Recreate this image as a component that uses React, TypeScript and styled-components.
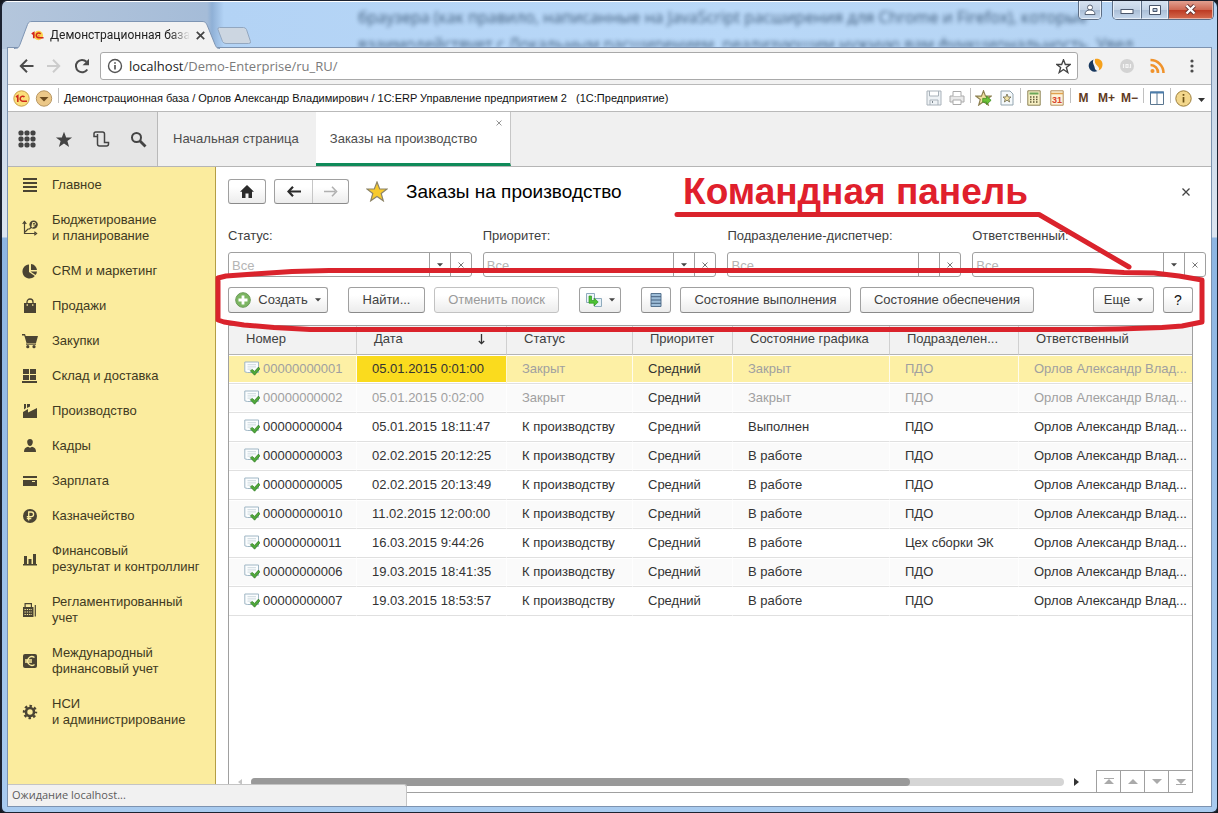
import React from 'react';
import styled, { createGlobalStyle, css } from 'styled-components';

const Global = createGlobalStyle`
  * { box-sizing: border-box; }
  html, body, #root { height: 100%; }
  body { margin: 0; background: #15181f; font: 13px/16px Arial, "Liberation Sans", sans-serif; color: #404040; }
  button, input { font: inherit; color: inherit; }
  button { cursor: pointer; }
  svg { display: block; flex: none; }
`;

const ui = '"Open Sans", "Noto Sans", sans-serif';

/* ---------- window frame ---------- */
const Frame = styled.div`
  position: relative;
  display: flex;
  flex-direction: column;
  min-height: 100%;
  padding: 0 6px 6px;
  overflow: hidden;
  border: solid #1c2230;
  border-width: 1px 1px 1px 2px;
  border-radius: 7px 7px 6px 6px;
  background:
    linear-gradient(#fff, #fff) top / 100% 1px no-repeat,
    linear-gradient(90deg, #b4c6dc 0, #a5bcd8 205px, #8fb0d6 210px, #b3d3f5 222px, #b9d8f8 60%, #b5d3f2) top / 100% 48px no-repeat,
    linear-gradient(#c3d3e6 48px, #dce5f0 236px, #8db5e2 237px, #a9cbef 100%);
`;

const Glass = styled.header`
  position: relative;
  display: flex;
  align-items: flex-end;
  height: 47px;
  padding-left: 6px;
  flex: none;
`;

const Behind = styled.p`
  position: absolute;
  left: 350px;
  top: 3px;
  margin: 0;
  width: 840px;
  height: 44px;
  overflow: hidden;
  white-space: pre;
  font: 16px/27px ${ui};
  color: #2d4a69;
  opacity: 0.85;
  filter: blur(2px);
`;

const BrowserTab = styled.div`
  position: relative;
  display: flex;
  align-items: center;
  width: 206px;
  height: 28px;
  padding: 0 18px 0 17px;
  margin-bottom: -1px;
  z-index: 1;
`;
const TabShape = styled.svg`
  position: absolute;
  inset: 0;
`;
const TabTitle = styled.span`
  position: relative;
  flex: 1;
  margin: 0 6px;
  white-space: nowrap;
  font: 12px/18px Roboto, ${ui};
  color: #222;
  mask-image: linear-gradient(90deg, #000 86%, transparent);
`;
const BareButton = styled.button`
  position: relative;
  display: flex;
  align-items: center;
  justify-content: center;
  padding: 0;
  border: 0;
  background: none;
`;
const NewTab = styled.button`
  margin: 0 0 3px -4px;
  padding: 0;
  border: 0;
  background: none;
`;

const Caption = styled.div`
  position: absolute;
  top: 0;
  right: -3px;
  display: flex;
`;
const CaptionGroup = styled.div`
  display: flex;
  margin-left: 10px;
  border: 1px solid #5c6d84;
  border-top: 0;
  border-radius: 0 0 5px 5px;
  overflow: hidden;
`;
const CaptionButton = styled.button<{ $w: number; $danger?: boolean }>`
  display: flex;
  align-items: center;
  justify-content: center;
  width: ${(p) => p.$w}px;
  height: 18px;
  padding: 0;
  border: 1px solid #e6eef8;
  border-top: 0;
  background: linear-gradient(#d7e3f1 0, #c4d3e5 50%, #a9bdd5 51%, #c3d5ea 100%);
  & + & { border-left: 1px solid #5c6d84; }
  ${(p) => p.$danger && css`
    border-color: #e9b0a2;
    background: linear-gradient(#e2a090 0, #cf6a55 50%, #bb3720 51%, #d2664a 100%);
  `}
`;

const Client = styled.div`
  position: relative;
  flex: 1;
  display: flex;
  flex-direction: column;
  background: #fff;
  outline: 1px solid #7d93b0;
`;

const AddressBar = styled.div`
  display: flex;
  align-items: center;
  height: 37px;
  padding: 0 10px 0 4px;
  background: #f2f2f2;
  border-bottom: 1px solid #b9b9b9;
`;
const NavIcon = styled(BareButton)`
  width: 28px;
  height: 28px;
`;
const UrlBox = styled.div`
  display: flex;
  align-items: center;
  flex: 1;
  height: 28px;
  margin: 0 9px 0 4px;
  padding: 0 6px;
  border: 1px solid #a9a9a9;
  border-radius: 3px;
  background: #fff;
`;
const Url = styled.div`
  flex: 1;
  margin-left: 6px;
  font: 13px/20px ${ui};
  color: #7b7b7b;
  b { font-weight: 400; color: #222; }
`;
const Extensions = styled.div`
  display: flex;
  align-items: center;
  gap: 14px;
`;

const SystemBar = styled.div`
  display: flex;
  align-items: center;
  height: 27px;
  padding: 0 4px 0 5px;
  border-bottom: 1px solid #b9b9b9;
  background: #fff;
`;
const SystemTitle = styled.span`
  flex: 1;
  margin-left: 4px;
  font: 11px/16px "Liberation Sans", Arial, sans-serif;
  color: #111;
  white-space: pre;
`;
const Divider = styled.i`
  width: 1px;
  height: 15px;
  margin: 0 1px 6px 2px;
  background: #c0c0c0;
`;
const ToolIcon = styled(BareButton)`
  width: 23px;
  height: 22px;
  font: bold 12px/16px "Liberation Sans", Arial, sans-serif;
  color: #5f3a22;
`;

/* ---------- section tabs ---------- */
const TabStrip = styled.div`
  display: flex;
  height: 55px;
  background: #f0f0f0;
  border-bottom: 1px solid #b5b5b5;
`;
const QuickIcons = styled.div`
  display: flex;
  align-items: center;
  justify-content: space-between;
  width: 150px;
  padding: 0 8px;
  background: #e5e5e5;
  border-right: 1px solid #b9b9b9;
  ${BareButton} { width: 22px; height: 24px; }
`;
const SectionTab = styled.div<{ $active?: boolean }>`
  position: relative;
  display: flex;
  align-items: center;
  padding: 0 17px 0 15px;
  color: #4d4d4d;
  white-space: nowrap;
  a { color: inherit; text-decoration: none; }
  ${(p) => p.$active && css`
    padding: 3px 33px 0 14px;
    background: #fff;
    border-right: 1px solid #c6c6c6;
    border-bottom: 3px solid #0f8a59;
  `}
`;
const TabClose = styled(BareButton)`
  position: absolute;
  top: 6px;
  right: 6px;
  width: 10px;
  height: 10px;
`;

/* ---------- body ---------- */
const Body = styled.div`
  display: flex;
  flex: 1;
`;
const Sidebar = styled.nav`
  width: 208px;
  flex: none;
  padding-top: 1px;
  background: #fbec9e;
  border-right: 1px solid #b49e45;
`;
const SideLink = styled.a`
  display: flex;
  align-items: center;
  padding: 9px 4px 10px 14px;
  color: #3f3a22;
  text-decoration: none;
  white-space: pre;
  span { margin-left: 14px; }
`;

const Page = styled.main`
  position: relative;
  flex: 1;
  min-width: 0;
  display: flex;
  flex-direction: column;
  padding: 12px 18px 13px 12px;
`;
const PageHeader = styled.div`
  display: flex;
  align-items: center;
  height: 25px;
`;
const face = css`
  border: 1px solid #a0a0a0;
  border-bottom-color: #8a8a8a;
  border-radius: 3px;
  background: linear-gradient(#fff 30%, #ececec);
`;
const HomeButton = styled.button`
  ${face}
  display: flex;
  align-items: center;
  justify-content: center;
  width: 38px;
  height: 25px;
  padding: 0;
`;
const History = styled.div`
  ${face}
  display: flex;
  height: 25px;
  margin: 0 17px 0 8px;
  ${BareButton} { width: 37px; }
  ${BareButton} + ${BareButton} { width: 36px; border-left: 1px solid #c6c6c6; }
`;
const Title = styled.h1`
  flex: 1;
  margin: 0 0 0 18px;
  font: 19px/24px Arial, "Liberation Sans", sans-serif;
  color: #000;
`;

const Filters = styled.div`
  display: grid;
  grid-template-columns: 244fr 234fr 234fr 234fr;
  column-gap: 11px;
  margin: 24px -13px 0 0;
`;
const Filter = styled.label`
  display: block;
  min-width: 0;
`;
const Combo = styled.span`
  display: flex;
  height: 25px;
  margin-top: 8px;
  border: 1px solid #a0a0a0;
  border-radius: 3px;
  background: #fff;
  ${BareButton} { width: 21px; border-left: 1px solid #a0a0a0; }
`;
const ComboInput = styled.input`
  flex: 1;
  min-width: 0;
  padding: 2px 3px 0;
  border: 0;
  background: none;
  outline: 0;
  &::placeholder { color: #b5b5b5; opacity: 1; }
`;

const Commands = styled.div`
  display: flex;
  gap: 9px;
  margin: 10px 0 12px;
`;
const Command = styled.button<{ $w: number; $gap?: number }>`
  ${face}
  display: flex;
  align-items: center;
  justify-content: center;
  gap: 7px;
  flex: none;
  width: ${(p) => p.$w}px;
  height: 26px;
  margin-right: ${(p) => p.$gap ?? 0}px;
  padding: 0;
  white-space: nowrap;
  &:disabled { color: #9a9a9a; border-color: #c2c2c2; cursor: default; }
`;
const HelpCommand = styled(Command)`
  font-size: 14px;
  color: #111;
`;
const Spacer = styled.span`
  flex: 1;
`;

const Grid = styled.div`
  flex: 1;
  display: flex;
  flex-direction: column;
  justify-content: space-between;
  border: 1px solid #a0a0a0;
`;
const Table = styled.table`
  width: 100%;
  table-layout: fixed;
  border-collapse: separate;
  border-spacing: 0;
`;
const Th = styled.th`
  height: 29px;
  padding: 0 8px 2px 17px;
  border-right: 1px solid #d0d0d0;
  border-bottom: 1px solid #b5b5b5;
  background: #f2f2f2;
  font-weight: 400;
  text-align: left;
  white-space: nowrap;
  overflow: hidden;
  text-overflow: ellipsis;
  &:last-child { border-right: 0; }
`;
const ThSort = styled.span`
  display: flex;
  align-items: center;
  justify-content: space-between;
  padding-right: 12px;
`;
const Tr = styled.tr<{ $selected?: boolean; $closed?: boolean }>`
  color: ${(p) => (p.$closed ? '#a0a0a0' : '#333')};
  background: #fff;
  &:nth-child(even) { background: #fafafa; }
  ${(p) => p.$selected && css`&& { background: #fdf0a5; }`}
`;
const Td = styled.td<{ $current?: boolean; $dark?: boolean }>`
  height: 29px;
  padding: 0 2px 1px 15px;
  border-bottom: 1px solid #e0e0e0;
  border-right: 1px solid rgba(255, 255, 255, 0.8);
  box-shadow: inset 0 1px #fff, inset 0 -1px #fff;
  white-space: nowrap;
  overflow: hidden;
  text-overflow: ellipsis;
  ${(p) => p.$dark && 'color: #333;'}
  ${(p) => p.$current && 'background: #fadb1e; color: #333;'}
  &:last-child { border-right: 0; }
`;
const OrderNumber = styled.span`
  display: flex;
  align-items: center;
  gap: 3px;
`;

const GridFooter = styled.div`
  display: flex;
  align-items: center;
  height: 21px;
  padding-left: 9px;
`;
const Track = styled.div`
  flex: 1;
  height: 8px;
  margin: 0 10px 0 9px;
  border-radius: 4px;
  background: #d5d5d5;
`;
const Thumb = styled.div`
  width: 81%;
  height: 8px;
  border-radius: 4px;
  background: #999;
`;
const Steps = styled.div`
  display: flex;
  height: 22px;
  margin: -1px 0 0 17px;
  border-top: 1px solid #a0a0a0;
  ${BareButton} { width: 24px; border-left: 1px solid #a0a0a0; }
`;

const StatusBubble = styled.div`
  position: absolute;
  left: 0;
  bottom: 0;
  width: 399px;
  height: 22px;
  padding-left: 4px;
  background: #f1f1f1;
  border: solid #c4c4c4;
  border-width: 1px 1px 0 0;
  border-radius: 0 3px 0 0;
  font: 11px/20px ${ui};
  color: #5c5c5c;
`;

/* ---------- red marker note ---------- */
const Note = styled.strong`
  position: absolute;
  right: 183px;
  top: 2px;
  font: bold 37px/46px Arial, "Liberation Sans", sans-serif;
  color: #e0202c;
  white-space: nowrap;
`;
const Marker = styled.svg`
  position: absolute;
  right: 5px;
  top: 42px;
  pointer-events: none;
`;

/* ---------- icons ---------- */
const Cross = ({ s = 8, c = '#444', w = 1.3 }: { s?: number; c?: string; w?: number }) => (
  <svg width={s} height={s} viewBox="0 0 8 8" stroke={c} strokeWidth={w}><path d="M.7.7l6.6 6.6M7.3.7L.7 7.3" /></svg>
);
const Down = () => <svg width="6" height="4" viewBox="0 0 6 4" fill="#444"><path d="M0 .3h6L3 3.6z" /></svg>;
const Logo = () => (
  <svg width="13" height="13" viewBox="0 0 14 14" fill="none">
    <circle cx="8" cy="7" r="5" fill="#fbd24c" />
    <path d="M.8 5.400L3 4v6" stroke="#d3261b" strokeWidth="1.800" />
    <path d="M10.400 5.400a2.600 2.600 0 1 0-1.900 4.100h5" stroke="#d3261b" strokeWidth="1.700" />
    <path d="M9 7.500H8" stroke="#d3261b" strokeWidth="1.400" />
  </svg>
);
const Doc = () => (
  <svg width="16" height="15" viewBox="0 0 16 15" fill="none">
    <path d="M.8 1h13.700v10.500H3.400L.8 10.800z" fill="#fbfdfe" stroke="#9fb6c4" />
    <path d="M3.500 3.700h8.500M3.500 5.900h8.500M3.500 8.100h4" stroke="#ccd8de" />
    <path d="M6.300 9.800l2-1.400 2.200 2 4-4.300 1.300 1.800-5.200 6.300z" fill="#4fa83a" stroke="#2b7a20" strokeWidth=".7" />
  </svg>
);
const STAR = 'M11 1l2.700 7h7.300l-5.800 4.500 2.100 7.300L11 15.400l-6.300 4.400 2.100-7.300L1 8h7.300z';

const Side = ({ children }: { children: React.ReactNode }) => (
  <svg width="16" height="16" viewBox="0 0 16 16" fill="#4a4433">{children}</svg>
);

const sections: { label: string; icon: React.ReactNode }[] = [
  { label: 'Главное', icon: <path d="M1 1h14v2H1zM1 5h14v2H1zM1 9h14v2H1zM1 13h14v2H1z" /> },
  {
    label: 'Бюджетирование\nи планирование',
    icon: (
      <>
        <path d="M2.500 2.500v11h11M3 12l3-3h1.500l2-2M.7 4l1.800-2.500L4.300 4M12.300 11.700l2.300 1.800-2.300 1.800" fill="none" stroke="#4a4433" strokeWidth="1.200" />
        <circle cx="11.600" cy="4.600" r="4.200" />
        <path d="M10.600 7.600V2.500h1.600a1.200 1.200 0 0 1 0 2.600H9.400M9.400 6.400h3" fill="none" stroke="#fbec9e" />
      </>
    ),
  },
  { label: 'CRM и маркетинг', icon: <><path d="M7 1.500V9l5.800 4A7 7 0 1 1 7 1.500z" /><path d="M9 1a6.500 6.500 0 0 1 6 6H9z" /><path d="M8.500 8.500H15a6.500 6.500 0 0 1-1.500 3.600z" /></> },
  { label: 'Продажи', icon: <><path d="M2 5h12v10H2z" /><path d="M5 8V4a3 3 0 0 1 6 0v4" fill="none" stroke="#4a4433" strokeWidth="1.300" /><path d="M5.200 6v2M10.800 6v2" stroke="#fbec9e" /></> },
  { label: 'Закупки', icon: <><path d="M0 1h3l.7 2H16l-2 7H4.500L2.300 2.500H0z" /><path d="M4 10.500h10v1.200H4z" /><circle cx="5.800" cy="13.700" r="1.600" /><circle cx="12" cy="13.700" r="1.600" /></> },
  { label: 'Склад и доставка', icon: <path d="M1 1h6v5H1zM8 1h6v5H8zM1 7h6v5H1zM8 7h6v5H8zM0 13h15v2H0z" /> },
  { label: 'Производство', icon: <path d="M1 15V9l5-3v3.500L15 5v10zM2 1h2v4L2 6.500zM5 1h3v2.500L5 5z" /> },
  { label: 'Кадры', icon: <><path d="M8 1c2 0 3 1.300 2.800 3.200C10.600 6.500 9.500 8 8 8S5.400 6.500 5.200 4.200C5 2.300 6 1 8 1z" /><path d="M2 14c0-3 1-4.500 4-5.200l2 1 2-1c3 .7 4 2.200 4 5.200z" /></> },
  { label: 'Зарплата', icon: <path fillRule="evenodd" d="M1 3h14v2H1zM1 7h14v6H1zM10 8h3v1h-3z" /> },
  {
    label: 'Казначейство',
    icon: <><circle cx="8" cy="8" r="7" /><path d="M6.700 12.500V4h2.600a2.300 2.300 0 0 1 0 4.600H4.800M4.800 10.500h4.500" fill="none" stroke="#fbec9e" strokeWidth="1.300" /></>,
  },
  { label: 'Финансовый\nрезультат и контроллинг', icon: <path d="M1 13h14v1.500H1zM2 5h3v8H2zM6.500 8h3v5h-3zM11 3h3v10h-3z" /> },
  {
    label: 'Регламентированный\nучет',
    icon: (
      <>
        <path fillRule="evenodd" d="M2.500 1h7.500v4h1.500v10H1V5h1.500zM3.700 2.200V5h5.100V2.200z" />
        <path d="M13.300 3v11.500" stroke="#4a4433" strokeWidth="1.200" />
        <path d="M2.500 7.500h7.500M2.500 10h7.500M2.500 12.500h7.500" stroke="#fbec9e" strokeDasharray="1.300 1" />
      </>
    ),
  },
  {
    label: 'Международный\nфинансовый учет',
    icon: <><rect x="1" y="1" width="14" height="14" rx="2" /><path d="M12.500 4.600A4.300 4.300 0 1 0 12.500 11.400M3 7h7M3 9h7" fill="none" stroke="#fbec9e" strokeWidth="1.300" /></>,
  },
  {
    label: 'НСИ\nи администрирование',
    icon: (
      <>
        <circle cx="8" cy="8" r="4" fill="none" stroke="#4a4433" strokeWidth="2.600" />
        <circle cx="8" cy="8" r="6" fill="none" stroke="#4a4433" strokeWidth="2.400" strokeDasharray="2.500 2.212" strokeDashoffset="1.250" />
      </>
    ),
  },
];

const rows = [
  ['00000000001', '05.01.2015 0:01:00', 'Закрыт', 'Закрыт', 'ПДО'],
  ['00000000002', '05.01.2015 0:02:00', 'Закрыт', 'Закрыт', 'ПДО'],
  ['00000000004', '05.01.2015 18:11:47', 'К производству', 'Выполнен', 'ПДО'],
  ['00000000003', '02.02.2015 20:12:25', 'К производству', 'В работе', 'ПДО'],
  ['00000000005', '02.02.2015 20:13:49', 'К производству', 'В работе', 'ПДО'],
  ['00000000010', '11.02.2015 12:00:00', 'К производству', 'В работе', 'ПДО'],
  ['00000000011', '16.03.2015 9:44:26', 'К производству', 'В работе', 'Цех сборки ЭК'],
  ['00000000006', '19.03.2015 18:41:35', 'К производству', 'В работе', 'ПДО'],
  ['00000000007', '19.03.2015 18:53:57', 'К производству', 'В работе', 'ПДО'],
];
const columnWidths = ['128', '150', '126', '100', '157', '129', '173'];

const filters = [
  { label: 'Статус:', list: true },
  { label: 'Приоритет:', list: true },
  { label: 'Подразделение-диспетчер:', list: false },
  { label: 'Ответственный:', list: true },
];

export default function App() {
  return (
    <>
      <Global />
      <Frame>
        <Glass>
          <Behind aria-hidden="true">
            {'браузера (как правило, написанные на JavaScript расширения для Chrome и Firefox), которые\nвзаимодействует с Локальным расширением, реализующим нужную вам функциональность. Увел'}
          </Behind>
          <BrowserTab>
            <TabShape width="206" height="28" viewBox="0 0 206 28">
              <path d="M0 27.500C4 27.500 4.500 27 6 23.500L13.500 3.500C14.500 1 15.500.5 18 .5h170c3 0 4 1 5.500 4.500l7.500 18.500c1.500 3.500 2.500 4 5 4" fill="#f2f2f2" stroke="#7e95b3" />
            </TabShape>
            <BareButton as="span"><Logo /></BareButton>
            <TabTitle>Демонстрационная база</TabTitle>
            <BareButton aria-label="Закрыть вкладку"><Cross s={9} w={1.5} /></BareButton>
          </BrowserTab>
          <NewTab aria-label="Новая вкладка">
            <svg width="36" height="18" viewBox="0 0 36 18"><path d="M3.500.5h24q2 0 3 2l4 12q.6 2-2 2H10q-2.500 0-3.500-2l-4.500-12q-.5-2 1.500-2z" fill="#ccd6e1" stroke="#92a7c0" /></svg>
          </NewTab>
          <Caption>
            <CaptionGroup>
              <CaptionButton $w={22} aria-label="Пользователь">
                <svg width="12" height="11" viewBox="0 0 12 11" fill="#fff" stroke="#5a6577"><circle cx="6" cy="3.500" r="2.500" /><path d="M1 10.500c0-3 2-4.500 5-4.500s5 1.500 5 4.500z" /></svg>
              </CaptionButton>
            </CaptionGroup>
            <CaptionGroup>
              <CaptionButton $w={28} aria-label="Свернуть">
                <svg width="14" height="10" viewBox="0 0 14 10"><rect x="1" y="4.500" width="12" height="4" fill="#fff" stroke="#4a566b" /></svg>
              </CaptionButton>
              <CaptionButton $w={27} aria-label="Развернуть">
                <svg width="12" height="10" viewBox="0 0 12 10"><path fillRule="evenodd" d="M.5.5h11v9H.5zM4 3.500h4v3H4z" fill="#fff" stroke="#4a566b" /></svg>
              </CaptionButton>
              <CaptionButton $w={45} $danger aria-label="Закрыть">
                <svg width="13" height="11" viewBox="0 0 13 11"><path d="M2.500 1.500l8 8M10.500 1.500l-8 8" stroke="#5c3030" strokeWidth="4" /><path d="M2.500 1.500l8 8M10.500 1.500l-8 8" stroke="#fff" strokeWidth="2.400" /></svg>
              </CaptionButton>
            </CaptionGroup>
          </Caption>
        </Glass>

        <Client>
          <AddressBar>
            <NavIcon aria-label="Назад"><svg width="15" height="14" viewBox="0 0 15 14" fill="none" stroke="#4c4c4c" strokeWidth="2"><path d="M14.500 7H2M8 .8L1.800 7 8 13.200" /></svg></NavIcon>
            <NavIcon aria-label="Вперёд" disabled><svg width="14" height="14" viewBox="0 0 14 14" fill="none" stroke="#ccc" strokeWidth="2"><path d="M0 7h12M6 .8L12.200 7 6 13.200" /></svg></NavIcon>
            <NavIcon aria-label="Обновить"><svg width="16" height="16" viewBox="0 0 16 16"><path d="M13.300 11.500A6.200 6.200 0 1 1 12.500 3.700" fill="none" stroke="#4c4c4c" strokeWidth="2" /><path d="M15 .8v6.500H8.600z" fill="#4c4c4c" /></svg></NavIcon>
            <UrlBox>
              <svg width="16" height="16" viewBox="0 0 16 16" fill="none" stroke="#555" strokeWidth="1.400"><circle cx="8" cy="8" r="6.500" /><path d="M8 7v4.500M8 4.200v1.500" strokeWidth="1.700" /></svg>
              <Url><b>localhost</b>/Demo-Enterprise/ru_RU/</Url>
              <svg width="15" height="15" viewBox="0 0 22 22" fill="none" stroke="#444" strokeWidth="2"><path d={STAR} /></svg>
            </UrlBox>
            <Extensions>
              <svg width="18" height="16" viewBox="0 0 18 16"><path d="M6.500 1.500C3 3 1 6 2 9.500s5 5.500 8.500 3.500C7.500 12 8 9.500 7 7.500S5.500 3.500 6.500 1.500z" fill="#17375e" /><path d="M8 1c4-1 8 1.500 7.500 6-.2 3-2 5-4 5.500C13 10 11 8.500 9.500 7S7.500 3.500 8 1z" fill="#f5a11c" /></svg>
              <svg width="16" height="16" viewBox="0 0 16 16"><circle cx="8" cy="8" r="7" fill="#d3d3d3" /><path d="M4.500 6v4M7 6.500h2v3H7zM11.500 6v3.500h-1" fill="none" stroke="#f5f5f5" strokeWidth="1.200" /></svg>
              <svg width="18" height="16" viewBox="0 0 18 16" fill="none" stroke="#f0932b" strokeWidth="2.600"><circle cx="3.500" cy="13" r="1.300" fill="#f0932b" strokeWidth="1.500" /><path d="M1.500 7a7.500 7.500 0 0 1 7.500 8M1.500 2A13 13 0 0 1 14.500 15" /></svg>
              <svg width="20" height="16" viewBox="0 0 20 16" fill="#4c4c4c"><circle cx="11" cy="3" r="1.600" /><circle cx="11" cy="8" r="1.600" /><circle cx="11" cy="13" r="1.600" /></svg>
            </Extensions>
          </AddressBar>

          <SystemBar>
            <svg width="17" height="17" viewBox="0 0 17 17" fill="none"><circle cx="8.500" cy="8.500" r="7.700" fill="#fbdf7a" stroke="#caa04a" /><path d="M3 7l1.800-1.200V12M11.500 7a2.500 2.500 0 1 0-1.700 4.200H14" stroke="#cf2a1c" strokeWidth="1.600" /></svg>
            <BareButton aria-label="Главное меню">
              <svg width="26" height="17" viewBox="0 0 26 17"><circle cx="14" cy="8.500" r="7.700" fill="#ecc888" stroke="#b89763" /><path d="M9.500 7h9L14 11.500z" fill="#6b4a1e" /></svg>
            </BareButton>
            <Divider />
            <SystemTitle>{'Демонстрационная база / Орлов Александр Владимирович / 1С:ERP Управление предприятием 2   (1С:Предприятие)'}</SystemTitle>
            <ToolIcon aria-label="Сохранить"><svg width="16" height="16" viewBox="0 0 16 16" fill="#eef2f5" stroke="#a9b2ba"><path d="M1 1h14v14H1zM3.500 1v5h9V1M4 15v-5h8v5" /><path d="M6 12h1" stroke="#7b868f" strokeWidth="2" /></svg></ToolIcon>
            <ToolIcon aria-label="Печать"><svg width="16" height="16" viewBox="0 0 16 16" fill="#e9e9e9" stroke="#aaa"><path d="M1 6h14v6H1z" /><path d="M4 6V1.500h8V6M4 10h8v4.500H4z" fill="#fff" /></svg></ToolIcon>
            <Divider />
            <ToolIcon aria-label="Добавить в избранное"><svg width="17" height="16" viewBox="0 0 22 21"><path d={STAR} fill="#efe0a0" stroke="#8d8152" strokeWidth="1.500" /><path d="M10 11h5V8l6 5.500-6 5.500v-3h-5z" fill="#6cc238" stroke="#3a8a1d" /></svg></ToolIcon>
            <ToolIcon aria-label="Избранное"><svg width="14" height="16" viewBox="0 0 14 16"><path d="M1 1h9l3 3v11H1z" fill="#f5f9fb" stroke="#93a5b0" /><path d="M7 4l1.200 3H11L8.800 9l.8 3L7 10.200 4.400 12l.8-3L3 7h2.800z" fill="#f0e2a4" stroke="#6f6a4c" strokeWidth=".8" /></svg></ToolIcon>
            <Divider />
            <ToolIcon aria-label="Калькулятор"><svg width="14" height="16" viewBox="0 0 14 16"><path d="M.8.800h12.400v14.400H.8z" fill="#f7f0c4" stroke="#8d8456" /><path d="M2.500 3.500h9" stroke="#6aa657" strokeWidth="2" /><path d="M3 7h8.500M3 9.500h8.500M3 12h8.500" stroke="#5e5735" strokeWidth="1.500" strokeDasharray="1.500 1.500" /></svg></ToolIcon>
            <ToolIcon aria-label="Календарь"><svg width="14" height="16" viewBox="0 0 14 16"><path d="M.8.800h12.400v14.400H.8z" fill="#fdf3d9" stroke="#b58f5a" /><path d="M1 3.500h12" stroke="#e0a14c" strokeWidth="1.500" /><text x="7" y="13" textAnchor="middle" fontSize="9" fontWeight="bold" fontFamily="Liberation Sans" fill="#d8442a">31</text></svg></ToolIcon>
            <Divider />
            <ToolIcon>M</ToolIcon>
            <ToolIcon>M+</ToolIcon>
            <ToolIcon>M−</ToolIcon>
            <Divider />
            <ToolIcon aria-label="Панели"><svg width="14" height="14" viewBox="0 0 14 14"><path d="M.5 1h13v12.500H.5z" fill="#fff" stroke="#5a7690" /><path d="M0 1.500h14" stroke="#4b7cab" strokeWidth="2" /><path d="M7 2v11" stroke="#5a7690" /></svg></ToolIcon>
            <Divider />
            <ToolIcon aria-label="О программе"><svg width="17" height="17" viewBox="0 0 17 17"><circle cx="8.500" cy="8.500" r="7.700" fill="#f3d78c" stroke="#9b7d3a" /><path d="M8.500 7v5.500M8.500 4v1.700" stroke="#6b5015" strokeWidth="1.700" /></svg></ToolIcon>
            <BareButton aria-label="Ещё команды"><svg width="12" height="10" viewBox="0 0 12 10" fill="#333"><path d="M3 5h7L6.500 9z" /></svg></BareButton>
          </SystemBar>

          <TabStrip>
            <QuickIcons>
              <BareButton aria-label="Все функции"><svg width="18" height="18" viewBox="0 0 18 18" fill="#444">{[3, 9, 15].map((y) => [3, 9, 15].map((x) => <rect key={`${x}-${y}`} x={x - 2.5} y={y - 2.5} width="5" height="5" rx="1.800" />))}</svg></BareButton>
              <BareButton aria-label="Избранное"><svg width="18" height="17" viewBox="0 0 22 21" fill="#444"><path d={STAR} /></svg></BareButton>
              <BareButton aria-label="История"><svg width="17" height="16" viewBox="0 0 17 16" fill="none" stroke="#444" strokeWidth="1.500"><path d="M4.500 5.500H1V2.800Q1 1 2.800 1H9.500Q11.500 1 11.500 3V11.500H15.500V13Q15.500 15 13.500 15H6.500Q4.500 15 4.500 13V3" /></svg></BareButton>
              <BareButton aria-label="Поиск"><svg width="17" height="17" viewBox="0 0 17 17" fill="none" stroke="#444"><circle cx="6.500" cy="6.500" r="4.500" strokeWidth="2" /><path d="M10 10l5.500 5.500" strokeWidth="2.800" /></svg></BareButton>
            </QuickIcons>
            <SectionTab><a href="#home">Начальная страница</a></SectionTab>
            <SectionTab $active>
              <a href="#orders">Заказы на производство</a>
              <TabClose aria-label="Закрыть"><Cross s={6} c="#888" w={1.2} /></TabClose>
            </SectionTab>
          </TabStrip>

          <Body>
            <Sidebar>
              {sections.map((s) => (
                <SideLink href="#section" key={s.label}>
                  <Side>{s.icon}</Side>
                  <span>{s.label}</span>
                </SideLink>
              ))}
            </Sidebar>

            <Page>
              <PageHeader>
                <HomeButton aria-label="Домой"><svg width="14" height="13" viewBox="0 0 14 13" fill="#2b2b2b"><path d="M7 0l7 6.800h-2V13H8.500V8.500h-3V13H2V6.800H0z" /></svg></HomeButton>
                <History>
                  <BareButton aria-label="Назад"><svg width="14" height="11" viewBox="0 0 14 11"><path d="M14 5.500H3" stroke="#2b2b2b" strokeWidth="2.200" /><path d="M6 .8L1.500 5.500 6 10.200" fill="none" stroke="#2b2b2b" strokeWidth="2.200" /></svg></BareButton>
                  <BareButton aria-label="Вперед" disabled><svg width="14" height="11" viewBox="0 0 14 11"><path d="M0 5.500h11M8 .8l4.500 4.700L8 10.200" fill="none" stroke="#b0b0b0" strokeWidth="1.600" /></svg></BareButton>
                </History>
                <BareButton aria-label="В избранное"><svg width="22" height="21" viewBox="0 0 22 21"><path d={STAR} fill="#f8ca2c" stroke="#8c8468" strokeWidth="1.200" /></svg></BareButton>
                <Title>Заказы на производство</Title>
                <BareButton aria-label="Закрыть форму"><svg width="14" height="8" viewBox="0 0 14 8" stroke="#444" strokeWidth="1.300"><path d="M3.500.5l7 7M10.500.5l-7 7" /></svg></BareButton>
              </PageHeader>

              <Filters>
                {filters.map((f) => (
                  <Filter key={f.label}>
                    {f.label}
                    <Combo>
                      <ComboInput placeholder="Все" />
                      <BareButton aria-label="Выбрать">{f.list && <Down />}</BareButton>
                      <BareButton aria-label="Очистить"><Cross s={6} c="#666" w={1.2} /></BareButton>
                    </Combo>
                  </Filter>
                ))}
              </Filters>

              <Commands>
                <Command $w={100} $gap={11}>
                  <svg width="16" height="16" viewBox="0 0 16 16"><circle cx="8" cy="8" r="7.300" fill="#7cb662" stroke="#6b9a58" /><path d="M8 3.500v9M3.500 8h9" stroke="#fff" strokeWidth="2.800" /></svg>
                  Создать <Down />
                </Command>
                <Command $w={77}>Найти...</Command>
                <Command $w={125} $gap={11} disabled>Отменить поиск</Command>
                <Command $w={42} $gap={11} aria-label="Создать на основании">
                  <svg width="16" height="14" viewBox="0 0 16 14"><path d="M.5.500h8v9h-8z" fill="#eef5fa" stroke="#8fabbd" /><path d="M8.500 5.500h7v8h-7z" fill="#e6f0f7" stroke="#8fabbd" /><path d="M3 3h2.500v4.500H8V5l4.200 4L8 13v-2.800H3z" fill="#4cc234" stroke="#2f9420" strokeWidth=".7" /></svg>
                  <Down />
                </Command>
                <Command $w={30} aria-label="Реестр">
                  <svg width="12" height="14" viewBox="0 0 12 14"><path d="M1 .5h10v13H1z" fill="#9dbdd8" stroke="#56738f" /><path d="M1 3.700h10M1 7h10M1 10.300h10" stroke="#45617e" /></svg>
                </Command>
                <Command $w={171}>Состояние выполнения</Command>
                <Command $w={174}>Состояние обеспечения</Command>
                <Spacer />
                <Command $w={61}>Еще <Down /></Command>
                <HelpCommand $w={30}>?</HelpCommand>
              </Commands>

              <Grid>
                <Table>
                  <colgroup>{columnWidths.map((w, i) => <col key={i} width={w} />)}</colgroup>
                  <thead>
                    <tr>
                      <Th>Номер</Th>
                      <Th><ThSort>Дата <svg width="9" height="11" viewBox="0 0 9 11" fill="none" stroke="#333" strokeWidth="1.300"><path d="M4.500 0v9.500M1.800 7l2.700 2.700L7.200 7" /></svg></ThSort></Th>
                      <Th>Статус</Th>
                      <Th>Приоритет</Th>
                      <Th>Состояние графика</Th>
                      <Th>Подразделен...</Th>
                      <Th>Ответственный</Th>
                    </tr>
                  </thead>
                  <tbody>
                    {rows.map(([num, date, status, schedule, dept], i) => (
                      <Tr key={num} $selected={i === 0} $closed={status === 'Закрыт'}>
                        <Td><OrderNumber><Doc />{num}</OrderNumber></Td>
                        <Td $current={i === 0}>{date}</Td>
                        <Td>{status}</Td>
                        <Td $dark>Средний</Td>
                        <Td>{schedule}</Td>
                        <Td>{dept}</Td>
                        <Td>Орлов Александр Влад...</Td>
                      </Tr>
                    ))}
                  </tbody>
                </Table>
                <GridFooter>
                  <svg width="4" height="6" viewBox="0 0 4 6" fill="#c4c4c4"><path d="M4 0v6L0 3z" /></svg>
                  <Track><Thumb /></Track>
                  <svg width="5" height="8" viewBox="0 0 5 8" fill="#333"><path d="M0 0v8l5-4z" /></svg>
                  <Steps>
                    <BareButton aria-label="В начало"><svg width="10" height="7" viewBox="0 0 10 7" fill="#aaa"><path d="M0 0h10v1H0zM5 1l5 5H0z" /></svg></BareButton>
                    <BareButton aria-label="Вверх"><svg width="10" height="5" viewBox="0 0 10 5" fill="#aaa"><path d="M5 0l5 5H0z" /></svg></BareButton>
                    <BareButton aria-label="Вниз"><svg width="10" height="5" viewBox="0 0 10 5" fill="#aaa"><path d="M5 5L0 0h10z" /></svg></BareButton>
                    <BareButton aria-label="В конец"><svg width="10" height="7" viewBox="0 0 10 7" fill="#aaa"><path d="M0 6h10v1H0zM5 6L0 1h10z" /></svg></BareButton>
                  </Steps>
                </GridFooter>
              </Grid>

              <Note>Командная панель</Note>
              <Marker width="992" height="126" viewBox="0 0 992 126" fill="none" stroke="#da232c" strokeWidth="5" strokeLinecap="round" strokeLinejoin="round">
                <path d="M463 5.500H825L915 58" />
                <path d="M4 69L12 67 40 65 78 62.500 115 61.500H876L910 63.500 940 64 965 67 988 71V113L968 117 948 118.500 905 120 876 120.500H96L60 118.500 30 116 10 113 4 111z" />
              </Marker>
            </Page>
          </Body>

          <StatusBubble>Ожидание localhost...</StatusBubble>
        </Client>
      </Frame>
    </>
  );
}
